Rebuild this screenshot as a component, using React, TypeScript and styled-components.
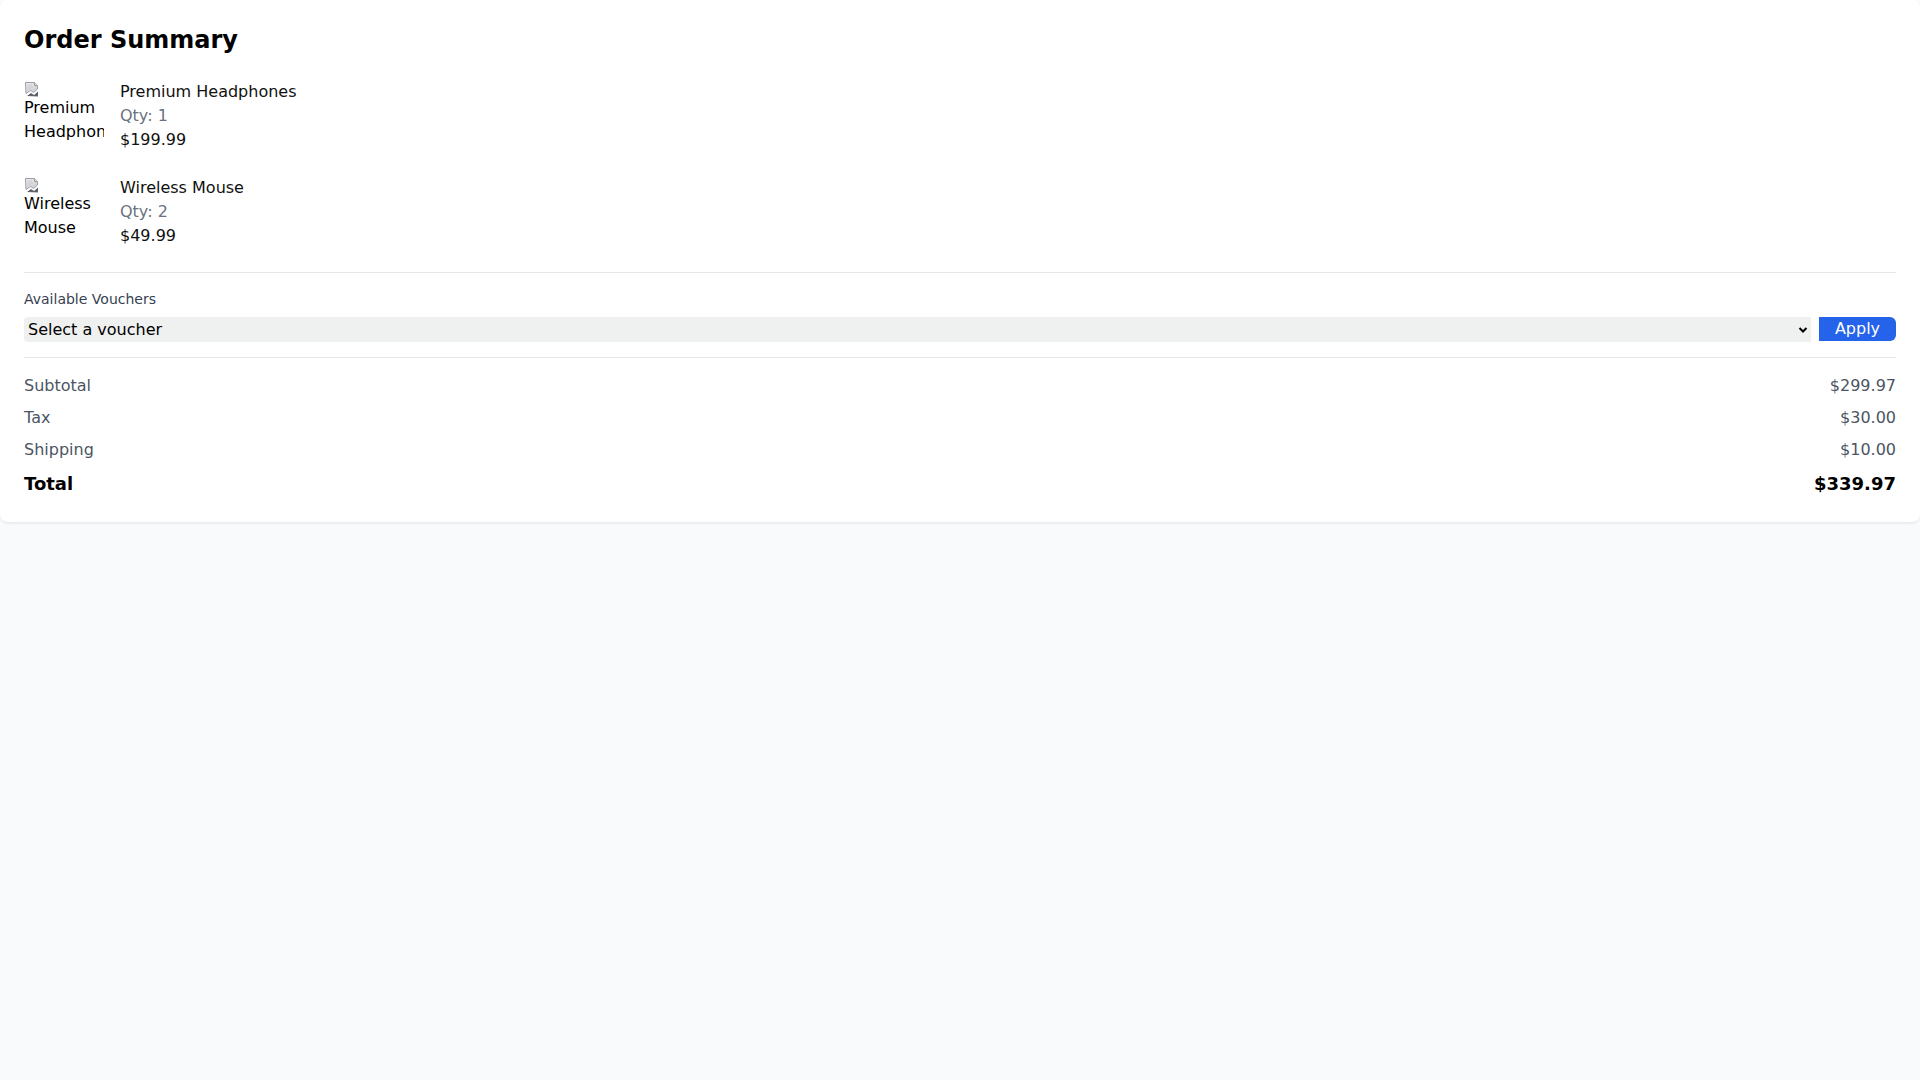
import styled, { createGlobalStyle } from "styled-components";

const GlobalStyle = createGlobalStyle`
  * {
    box-sizing: border-box;
  }
  html, body {
    margin: 0;
    padding: 0;
    background: #f9fafb;
    font-family: "DejaVu Sans", "Noto Sans", sans-serif;
    color: #111827;
  }
`;

const Page = styled.div`
  min-height: 1080px;
  background: #f9fafb;
`;

const Card = styled.section`
  background: #ffffff;
  border-radius: 8px;
  box-shadow: 0 1px 2px rgba(0, 0, 0, 0.06);
  border-bottom: 1px solid #eceef1;
  padding: 24px 24px 24px;
`;

const Title = styled.h2`
  margin: 0 0 24px;
  font-size: 24px;
  line-height: 32px;
  font-weight: 700;
  color: #000;
`;

const ItemList = styled.div`
  display: flex;
  flex-direction: column;
  gap: 16px;
  padding-bottom: 16px;
`;

const Item = styled.div`
  display: flex;
  gap: 16px;
`;

const Thumb = styled.div`
  width: 80px;
  height: 80px;
  flex-shrink: 0;
  overflow: hidden;
  font-size: 16px;
  line-height: 24px;
  color: #000;
`;

const BrokenIcon = styled.svg`
  display: block;
  width: 16px;
  height: 16px;
  margin: 1px 0 0;
`;

const AltText = styled.div`
  margin-top: -1px;
  width: 80px;
  white-space: pre-line;
  overflow: hidden;
`;

const ItemInfo = styled.div`
  display: flex;
  flex-direction: column;
`;

const ItemLine = styled.div<{ $muted?: boolean }>`
  font-size: 16px;
  line-height: 24px;
  color: ${(p) => (p.$muted ? "#6b7280" : "#111")};
`;

const VoucherSection = styled.div`
  border-top: 1px solid #e5e7eb;
  border-bottom: 1px solid #e5e7eb;
  padding: 16px 0 15px;
`;

const Label = styled.label`
  display: block;
  font-size: 14px;
  line-height: 20px;
  color: #374151;
  margin-bottom: 8px;
`;

const VoucherRow = styled.div`
  display: flex;
  gap: 8px;
  align-items: flex-start;
`;

const SelectWrap = styled.div`
  position: relative;
  flex: 1;
`;

const Select = styled.select`
  appearance: none;
  width: 100%;
  height: 25px;
  border: none;
  border-radius: 4px 0 0 4px;
  background: #eff0f0;
  padding: 0 4px;
  font-family: inherit;
  font-size: 16px;
  color: #000;
  outline: none;
`;

const Chevron = styled.svg`
  position: absolute;
  right: 3px;
  top: 8px;
  width: 10px;
  height: 10px;
  pointer-events: none;
`;

const ApplyButton = styled.button`
  width: 77px;
  height: 24px;
  border: none;
  border-radius: 0 6px 6px 0;
  background: #2563eb;
  color: #ffffff;
  font-family: inherit;
  font-size: 16px;
  line-height: 24px;
  padding: 0;
  cursor: pointer;
`;

const Totals = styled.div`
  display: flex;
  flex-direction: column;
  gap: 8px;
  padding-top: 16px;
`;

const TotalRow = styled.div<{ $strong?: boolean }>`
  display: flex;
  justify-content: space-between;
  font-size: ${(p) => (p.$strong ? "18px" : "16px")};
  line-height: ${(p) => (p.$strong ? "28px" : "24px")};
  font-weight: ${(p) => (p.$strong ? 700 : 400)};
  color: ${(p) => (p.$strong ? "#000" : "#4b5563")};
`;

type OrderItem = { name: string; alt: string; qty: number; price: string };

const items: OrderItem[] = [
  { name: "Premium Headphones", alt: "Premium\nHeadphones", qty: 1, price: "$199.99" },
  { name: "Wireless Mouse", alt: "Wireless\nMouse", qty: 2, price: "$49.99" },
];

function BrokenImage({ alt }: { alt: string }) {
  return (
    <Thumb>
      <BrokenIcon viewBox="0 0 16 16">
        <defs>
          <linearGradient id="paper" x1="0" y1="0" x2="1" y2="1">
            <stop offset="0" stopColor="#f2f3f4" />
            <stop offset="1" stopColor="#c4c7ca" />
          </linearGradient>
        </defs>
        <path d="M1.5 1.5h9l3 3v3.5l-4 3.5-3-2-4.5 3z" fill="url(#paper)" stroke="#9a9da1" />
        <path d="M10.5 1.5v3h3" fill="#dfe1e3" stroke="#9a9da1" />
        <path d="M3 15l4-3 3 2 4-3.5v5z" fill="#5f6368" />
        <path d="M3 4h5M3 6h6M3 8h4" stroke="#c8cbce" />
      </BrokenIcon>
      <AltText>{alt}</AltText>
    </Thumb>
  );
}

export default function App() {
  return (
    <>
      <GlobalStyle />
      <Page>
        <Card>
          <Title>Order Summary</Title>
          <ItemList>
            {items.map((item) => (
              <Item key={item.name}>
                <BrokenImage alt={item.alt} />
                <ItemInfo>
                  <ItemLine>{item.name}</ItemLine>
                  <ItemLine $muted>Qty: {item.qty}</ItemLine>
                  <ItemLine>{item.price}</ItemLine>
                </ItemInfo>
              </Item>
            ))}
          </ItemList>
          <VoucherSection>
            <Label htmlFor="voucher">Available Vouchers</Label>
            <VoucherRow>
              <SelectWrap>
                <Select id="voucher" defaultValue="">
                  <option value="">Select a voucher</option>
                  <option value="SAVE10">SAVE10 - 10% off</option>
                  <option value="FREESHIP">FREESHIP - Free shipping</option>
                </Select>
                <Chevron viewBox="0 0 10 10">
                  <path d="M1.5 3l3.5 3.5L8.5 3" fill="none" stroke="#000" strokeWidth="2" />
                </Chevron>
              </SelectWrap>
              <ApplyButton>Apply</ApplyButton>
            </VoucherRow>
          </VoucherSection>
          <Totals>
            <TotalRow>
              <span>Subtotal</span>
              <span>$299.97</span>
            </TotalRow>
            <TotalRow>
              <span>Tax</span>
              <span>$30.00</span>
            </TotalRow>
            <TotalRow>
              <span>Shipping</span>
              <span>$10.00</span>
            </TotalRow>
            <TotalRow $strong>
              <span>Total</span>
              <span>$339.97</span>
            </TotalRow>
          </Totals>
        </Card>
      </Page>
    </>
  );
}
